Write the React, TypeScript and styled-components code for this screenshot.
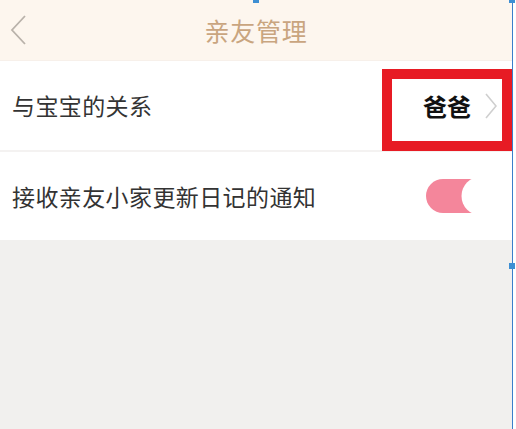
import React from "react";
import styled, { createGlobalStyle } from "styled-components";

const Global = createGlobalStyle`
  html, body { margin: 0; padding: 0; background: #ffffff; }
  body { font-family: "Noto Sans CJK SC", "Noto Sans", sans-serif; }
`;

const Frame = styled.div`
  position: relative;
  width: 516px;
  height: 429px;
  display: flex;
  background: #ffffff;
  overflow: hidden;
`;

const Screen = styled.div`
  width: 512px;
  height: 429px;
  display: flex;
  flex-direction: column;
  background: #f1f0ee;
`;

const Edge = styled.div`
  width: 1px;
  height: 100%;
  background: #3b7fca;
`;

const Handle = styled.div<{ $x: number; $y: number }>`
  position: absolute;
  left: ${(p) => p.$x}px;
  top: ${(p) => p.$y}px;
  width: 6px;
  height: 6px;
  background: #3e8fd3;
`;

const Header = styled.header`
  height: 60px;
  background: #fdf6ee;
  display: grid;
  grid-template-columns: 1fr auto 1fr;
  align-items: center;
  border-bottom: 1px solid #f7f0ea;
`;

const Back = styled.div`
  display: flex;
  align-items: center;
  padding-left: 10px;
`;

const Title = styled.h1`
  margin: 0;
  font-size: 25px;
  font-weight: 400;
  color: #c9a57f;
  letter-spacing: 0.8px;
`;

const Row = styled.div<{ $h: number }>`
  position: relative;
  height: ${(p) => p.$h}px;
  background: #ffffff;
  display: flex;
  align-items: center;
  justify-content: space-between;
  padding: 0 11px 0 12px;
`;

const Divider = styled.div`
  height: 2px;
  background: #f4f2f1;
`;

const Label = styled.span`
  font-size: 23px;
  letter-spacing: 0.4px;
  color: #333333;
  line-height: 1;
`;

const Value = styled.div`
  display: flex;
  align-items: center;
  gap: 14px;
  padding-right: 4px;
`;

const ValueText = styled.span`
  font-size: 24px;
  font-weight: 700;
  color: #111111;
  line-height: 1;
`;

const Highlight = styled.div`
  position: absolute;
  left: 382px;
  top: 8px;
  width: 130px;
  height: 82px;
  box-sizing: border-box;
  border: 10px solid #e71b24;
  pointer-events: none;
`;

export default function App() {
  return (
    <>
      <Global />
      <Frame>
        <Screen>
          <Header>
            <Back>
              <svg width="18" height="32" viewBox="0 0 18 32">
                <path d="M15 2 L2 16 L15 30" fill="none" stroke="#b9b2aa" strokeWidth="1.8" />
              </svg>
            </Back>
            <Title>亲友管理</Title>
            <div />
          </Header>
          <Row $h={89}>
            <Label>与宝宝的关系</Label>
            <Value>
              <ValueText>爸爸</ValueText>
              <svg width="12" height="26" viewBox="0 0 12 26">
                <path d="M1 1 L11 13 L1 25" fill="none" stroke="#cfcfcf" strokeWidth="1.6" />
              </svg>
            </Value>
            <Highlight />
          </Row>
          <Divider />
          <Row $h={88}>
            <Label>接收亲友小家更新日记的通知</Label>
            <svg width="75" height="40" viewBox="0 0 75 40">
              <rect x="0" y="3" width="66" height="34" rx="17" fill="#f4869b" />
              <circle cx="55" cy="20" r="19.5" fill="#ffffff" />
            </svg>
          </Row>
        </Screen>
        <Edge />
        <Handle $x={253} $y={-3} />
        <Handle $x={509} $y={-3} />
        <Handle $x={509} $y={263} />
      </Frame>
    </>
  );
}
